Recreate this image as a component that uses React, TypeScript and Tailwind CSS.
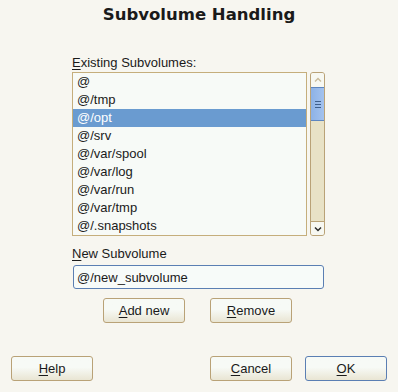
const items = [
  "@",
  "@/tmp",
  "@/opt",
  "@/srv",
  "@/var/spool",
  "@/var/log",
  "@/var/run",
  "@/var/tmp",
  "@/.snapshots",
];

function Btn({
  hot,
  rest,
  focus,
  className,
}: {
  hot: string;
  rest: string;
  focus?: boolean;
  className?: string;
}) {
  return (
    <button
      className={
        "flex h-[25px] w-[82px] items-center justify-center rounded-[3px] border bg-gradient-to-b from-[#f7faf6] from-45% to-[#e9e5d3] text-[13px] text-[#1a1a1a] " +
        (focus ? "border-[#5b7fb3] " : "border-[#b9a277] ") +
        (className ?? "")
      }
    >
      <span>
        <span className="underline underline-offset-2">{hot}</span>
        {rest}
      </span>
    </button>
  );
}

export default function App() {
  const selected = 2;
  return (
    <div
      className="flex h-[392px] w-[398px] flex-col bg-[#f7f6f0] text-[#1a1a1a]"
      style={{ fontFamily: '"Liberation Sans", Arial, sans-serif' }}
    >
      {/* Title */}
      <h1
        className="pt-[3px] text-center text-[16.5px] font-bold leading-[24px]"
        style={{ fontFamily: '"DejaVu Sans", sans-serif' }}
      >
        Subvolume Handling
      </h1>

      <div className="ml-[72px] mt-[27px] flex w-[253px] flex-col">
        <label className="text-[13px] leading-[18px]">
          <span className="underline underline-offset-2">E</span>xisting
          Subvolumes:
        </label>

        {/* List with scrollbar */}
        <div className="flex gap-[3px]">
          <div className="flex h-[164px] w-[235px] flex-col border border-[#c5ae7c] bg-[#f7faf7]">
            {items.map((it, i) => (
              <div
                key={it}
                className={
                  "h-[18px] pl-[4px] text-[13px] leading-[18px] " +
                  (i === selected ? "bg-[#6a9bd0] text-white" : "")
                }
              >
                {it}
              </div>
            ))}
          </div>
          <div className="flex h-[164px] w-[15px] flex-col overflow-hidden rounded-[3px] border border-[#b9a277] bg-[#e8e2c6]">
            <div className="flex h-[14px] items-center justify-center bg-[#f7f8f2]">
              <svg width="8" height="6" viewBox="0 0 8 6">
                <path d="M1 4.5 L4 1.5 L7 4.5" fill="none" stroke="#c9bb9a" strokeWidth="1.3" />
              </svg>
            </div>
            <div className="flex h-[34px] flex-col items-center justify-center gap-[2px] border-y border-[#5d86c0] bg-gradient-to-r from-[#8db2e6] to-[#a3c2ee]">
              <div className="h-px w-[6px] bg-[#3f5f8c]" />
              <div className="h-px w-[6px] bg-[#3f5f8c]" />
              <div className="h-px w-[6px] bg-[#3f5f8c]" />
            </div>
            <div className="flex-1" />
            <div className="flex h-[14px] items-center justify-center border-t border-[#b9a277] bg-[#f7f8f2]">
              <svg width="8" height="6" viewBox="0 0 8 6">
                <path d="M1 1.5 L4 4.5 L7 1.5" fill="none" stroke="#2a2a2a" strokeWidth="1.5" />
              </svg>
            </div>
          </div>
        </div>

        <label className="mt-[9px] text-[13px] leading-[18px]">
          <span className="underline underline-offset-2">N</span>ew Subvolume
        </label>

        <input
          readOnly
          value="@/new_subvolume"
          className="ml-[1px] mt-[2px] h-[24px] w-[251px] rounded-[3px] border border-[#5b7fb3] bg-[#f7fbf9] px-[3px] text-[13px] text-[#1a1a1a] outline-none"
          style={{ fontFamily: '"Liberation Sans", Arial, sans-serif' }}
        />

        <div className="mt-[9px] flex gap-[25px] pl-[31px]">
          <Btn hot="A" rest="dd new" />
          <Btn hot="R" rest="emove" />
        </div>
      </div>

      {/* Bottom buttons */}
      <div className="mt-[33px] flex items-center pl-[11px]">
        <Btn hot="H" rest="elp" />
        <div className="flex-1" />
        <Btn hot="C" rest="ancel" />
        <Btn hot="O" rest="K" focus className="ml-[13px] mr-[11px]" />
      </div>
    </div>
  );
}
